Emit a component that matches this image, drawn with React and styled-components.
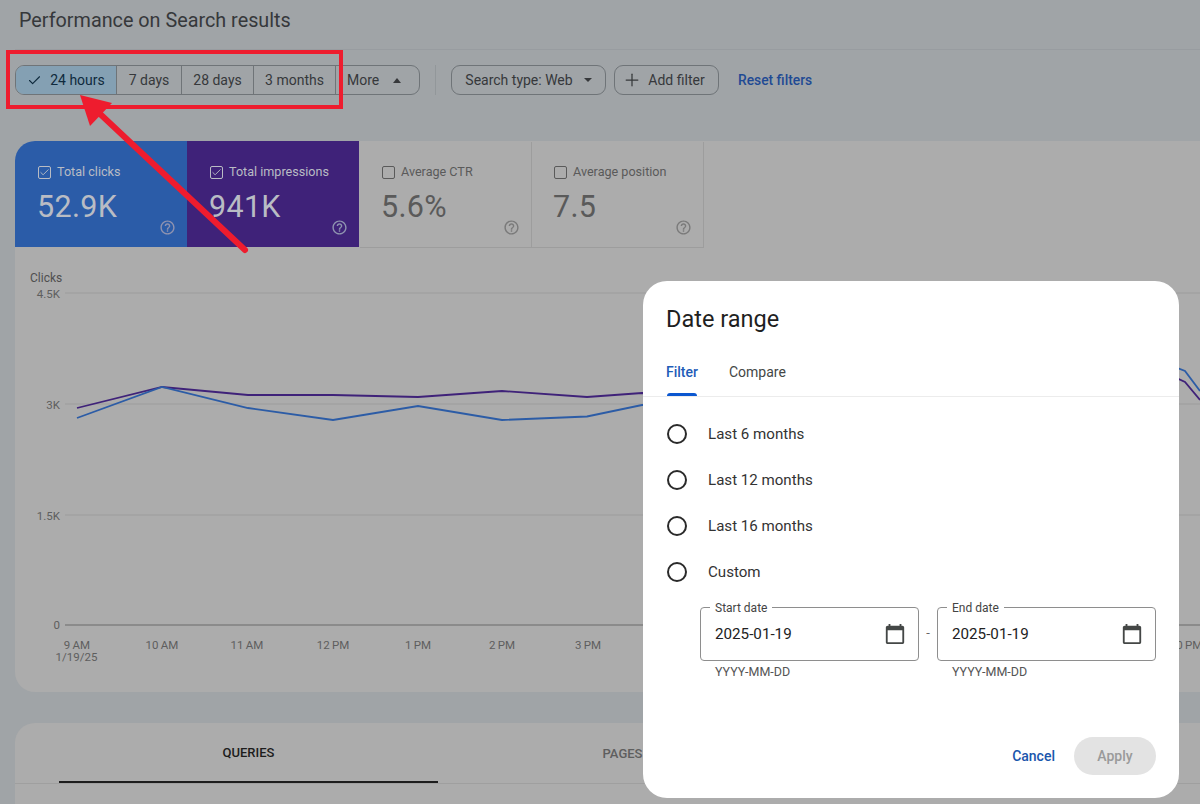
import React from "react";
import styled, { createGlobalStyle } from "styled-components";
import { Check, Plus } from "lucide-react";

const GlobalStyle = createGlobalStyle`
  html, body {
    margin: 0;
    padding: 0;
    height: 804px;
    overflow: hidden;
    background: #a0a4a7;
    font-family: Roboto, "Liberation Sans", sans-serif;
  }
`;

const ranges = [
  { label: "24 hours", selected: true },
  { label: "7 days", width: 65 },
  { label: "28 days", width: 72 },
  { label: "3 months", width: 82 },
];

const scores = [
  { label: "Total clicks", value: "52.9K", color: "#2b5ca8", checked: true },
  { label: "Total impressions", value: "941K", color: "#3f2279", checked: true },
  { label: "Average CTR", value: "5.6%" },
  { label: "Average position", value: "7.5" },
];

const gridLines = [
  { y: 293, label: "4.5K" },
  { y: 404, label: "3K" },
  { y: 515, label: "1.5K" },
];

const hours = [
  { x: 77, label: "9\u2009AM" },
  { x: 162, label: "10\u2009AM" },
  { x: 247, label: "11\u2009AM" },
  { x: 333, label: "12\u2009PM" },
  { x: 418, label: "1\u2009PM" },
  { x: 502, label: "2\u2009PM" },
  { x: 588, label: "3\u2009PM" },
  { x: 1186, label: "10\u2009PM" },
];

const bluePoints =
  "77,418 162,387 248,408 333,420 418,406 502,420 587,416.5 642,405 900,400 1172,366 1185,371 1200,391";
const purplePoints =
  "77,408 162,387 248,395 333,395 418,397 502,391 587,397 642,393 900,395 1172,376 1185,382 1200,400";

const presets = ["Last 6 months", "Last 12 months", "Last 16 months", "Custom"];

function HelpIcon({ light }) {
  return (
    <HelpSvg $light={light} viewBox="0 0 24 24">
      <path d="M11 18h2v-2h-2v2zm1-16C6.48 2 2 6.48 2 12s4.48 10 10 10 10-4.48 10-10S17.52 2 12 2zm0 18c-4.41 0-8-3.59-8-8s3.59-8 8-8 8 3.59 8 8-3.59 8-8 8zm0-14c-2.21 0-4 1.79-4 4h2c0-1.1.9-2 2-2s2 .9 2 2c0 2-3 1.75-3 5h2c0-2.25 3-2.5 3-5 0-2.21-1.79-4-4-4z" />
    </HelpSvg>
  );
}

function CalendarIcon() {
  return (
    <CalendarSvg viewBox="0 0 24 24">
      <path d="M20 3h-1V1h-2v2H7V1H5v2H4c-1.1 0-2 .9-2 2v16c0 1.1.9 2 2 2h16c1.1 0 2-.9 2-2V5c0-1.1-.9-2-2-2zm0 18H4V8h16v13z" />
    </CalendarSvg>
  );
}

function DateField({ label }) {
  return (
    <FieldColumn>
      <FieldBox>
        <FieldLabel>{label}</FieldLabel>
        <FieldValue>2025-01-19</FieldValue>
        <CalendarIcon />
      </FieldBox>
      <FieldHint>YYYY-MM-DD</FieldHint>
    </FieldColumn>
  );
}

export default function App() {
  return (
    <Page>
      <GlobalStyle />
      <Header>
        <Title>Performance on Search results</Title>
      </Header>

      <Toolbar>
        <RangeGroup>
          {ranges.map((item) => (
            <RangeItem key={item.label} $selected={item.selected} $width={item.width}>
              {item.selected && <Check size={15} strokeWidth={1.8} />}
              {item.label}
            </RangeItem>
          ))}
          <MoreItem>
            More
            <Caret $up />
          </MoreItem>
        </RangeGroup>
        <Divider />
        <Chip $width={155}>
          Search type: Web
          <Caret />
        </Chip>
        <Chip $width={105} $gap={6} $paddingRight={6}>
          <Plus size={20} strokeWidth={1.5} />
          Add filter
        </Chip>
        <ResetLink>Reset filters</ResetLink>
      </Toolbar>

      <Card>
        <ScoreRow>
          {scores.map((score) => (
            <Score key={score.label} $color={score.color}>
              <ScoreLabel>
                <Checkbox $checked={score.checked}>
                  {score.checked && <Check size={11} strokeWidth={2} />}
                </Checkbox>
                {score.label}
              </ScoreLabel>
              <ScoreValue>{score.value}</ScoreValue>
              <HelpIcon light={score.checked} />
            </Score>
          ))}
        </ScoreRow>
        <Chart viewBox="15 247 1185 445">
          <AxisTitle x="30" y="282">Clicks</AxisTitle>
          {gridLines.map((line) => (
            <g key={line.y}>
              <AxisText x="60" y={line.y + 5} textAnchor="end">{line.label}</AxisText>
              <line x1="65" x2="1200" y1={line.y} y2={line.y} stroke="#9c9c9c" />
            </g>
          ))}
          <AxisText x="60" y="629" textAnchor="end">0</AxisText>
          <line x1="65" x2="1200" y1="625" y2="625" stroke="#6a6a6a" />
          {hours.map((hour) => (
            <AxisText key={hour.x} x={hour.x} y="649" textAnchor="middle">{hour.label}</AxisText>
          ))}
          <AxisText x="76.5" y="661" textAnchor="middle">1/19/25</AxisText>
          <polyline points={purplePoints} fill="none" stroke="#3f2279" strokeWidth="1.8" />
          <polyline points={bluePoints} fill="none" stroke="#2c5ca6" strokeWidth="1.8" />
        </Chart>
      </Card>

      <TableCard>
        <TableTabs>
          <TableTab $active>QUERIES</TableTab>
          <TableTab>PAGES</TableTab>
        </TableTabs>
      </TableCard>

      <Annotation viewBox="0 0 1200 804">
        <rect x="8" y="52" width="333" height="55" fill="none" stroke="#ee1c2e" strokeWidth="4" />
        <line x1="245" y1="250" x2="98" y2="112" stroke="#ee1c2e" strokeWidth="6" strokeLinecap="round" />
        <polygon points="80,95 112,103 90,126" fill="#ee1c2e" />
      </Annotation>

      <Dialog>
        <DialogTitle>Date range</DialogTitle>
        <DialogTabs>
          <DialogTab $active>Filter</DialogTab>
          <DialogTab>Compare</DialogTab>
        </DialogTabs>
        <RadioList>
          {presets.map((preset) => (
            <RadioRow key={preset}>
              <Radio />
              {preset}
            </RadioRow>
          ))}
        </RadioList>
        <DateRow>
          <DateField label="Start date" />
          <Dash>-</Dash>
          <DateField label="End date" />
        </DateRow>
        <DialogActions>
          <CancelButton>Cancel</CancelButton>
          <ApplyButton>Apply</ApplyButton>
        </DialogActions>
      </Dialog>
    </Page>
  );
}

const Page = styled.div`
  position: relative;
  width: 1200px;
  height: 804px;
  overflow: hidden;
  padding-left: 15px;
  box-sizing: border-box;
  color: #3a3c3f;
`;

const Header = styled.div`
  height: 50px;
  border-bottom: 1px solid #989ca0;
  box-sizing: border-box;
  padding: 9px 0 0 4px;
`;

const Title = styled.h1`
  margin: 0;
  font-size: 19.8px;
  line-height: 24px;
  font-weight: 400;
  color: #36383b;
`;

const Toolbar = styled.div`
  display: flex;
  align-items: center;
  gap: 8px;
  height: 30px;
  margin-top: 15px;
`;

const RangeGroup = styled.div`
  display: flex;
  width: 405px;
  height: 30px;
  box-sizing: border-box;
  border: 1px solid #6f7478;
  border-radius: 9px;
  overflow: hidden;
`;

const RangeItem = styled.div`
  display: flex;
  align-items: center;
  justify-content: center;
  gap: 8px;
  flex: none;
  width: ${(p) => (p.$width ? `${p.$width}px` : "101px")};
  box-sizing: border-box;
  border-right: 1px solid #6f7478;
  font-size: 14px;
  color: ${(p) => (p.$selected ? "#0f2a3d" : "#36383b")};
  background: ${(p) => (p.$selected ? "#84a0b3" : "transparent")};
`;

const MoreItem = styled.div`
  display: flex;
  align-items: center;
  gap: 14px;
  padding-left: 11px;
  font-size: 14px;
  color: #36383b;
`;

const Caret = styled.span`
  width: 0;
  height: 0;
  border-left: 4.5px solid transparent;
  border-right: 4.5px solid transparent;
  ${(p) => (p.$up ? "border-bottom: 5px solid #36383b;" : "border-top: 4px solid #36383b;")}
`;

const Divider = styled.div`
  width: 1px;
  height: 30px;
  background: #92979a;
  margin: 0 7px;
`;

const Chip = styled.div`
  display: flex;
  align-items: center;
  justify-content: center;
  gap: ${(p) => p.$gap ?? 11}px;
  width: ${(p) => p.$width}px;
  height: 30px;
  box-sizing: border-box;
  padding-right: ${(p) => p.$paddingRight ?? 0}px;
  border: 1px solid #6f7478;
  border-radius: 9px;
  font-size: 14px;
  color: #36383b;
`;

const ResetLink = styled.a`
  margin-left: 11px;
  font-size: 13.8px;
  font-weight: 500;
  color: #1f4a94;
`;

const Card = styled.div`
  height: 551px;
  margin-top: 46px;
  background: #acacac;
  border-radius: 20px 0 0 20px;
  overflow: hidden;
`;

const ScoreRow = styled.div`
  display: flex;
  height: 106px;
`;

const Score = styled.div`
  position: relative;
  width: 172px;
  box-sizing: border-box;
  padding: 23px 0 0 23px;
  background: ${(p) => p.$color || "transparent"};
  color: ${(p) => (p.$color ? "#b9bcc4" : "#5a5a5a")};
  ${(p) => !p.$color && "box-shadow: 1px 1px 0 #9d9d9d;"}
`;

const ScoreLabel = styled.div`
  display: flex;
  align-items: center;
  gap: 6px;
  font-size: 12.6px;
  line-height: 16px;
`;

const Checkbox = styled.span`
  display: flex;
  align-items: center;
  justify-content: center;
  width: 13px;
  height: 13px;
  box-sizing: border-box;
  border: 1.3px solid currentColor;
  border-radius: 2px;
`;

const ScoreValue = styled.div`
  margin-top: 9px;
  margin-left: -1px;
  font-size: 30.5px;
  line-height: 36px;
  letter-spacing: 0.3px;
`;

const HelpSvg = styled.svg`
  position: absolute;
  right: 11px;
  bottom: 11px;
  width: 17px;
  height: 17px;
  fill: ${(p) => (p.$light ? "#8f93b0" : "#7a7a7a")};
`;

const Chart = styled.svg`
  display: block;
  width: 1185px;
  height: 445px;
`;

const AxisText = styled.text`
  font-size: 11.5px;
  fill: #5e5e5e;
`;

const AxisTitle = styled.text`
  font-size: 12px;
  fill: #4f4f4f;
`;

const TableCard = styled.div`
  height: 100px;
  margin-top: 31px;
  background: #acacac;
  border-radius: 20px 0 0 0;
`;

const TableTabs = styled.div`
  display: grid;
  grid-template-columns: 379px 369px;
  height: 60px;
  padding-left: 44px;
  border-bottom: 1px solid #9f9f9f;
`;

const TableTab = styled.div`
  display: flex;
  align-items: center;
  justify-content: center;
  height: 60px;
  box-sizing: border-box;
  font-size: 13px;
  font-weight: 500;
  color: ${(p) => (p.$active ? "#1d1d1d" : "#5e5e5e")};
  ${(p) => p.$active && "border-bottom: 2px solid #1d1d1d;"}
`;

const Annotation = styled.svg`
  position: absolute;
  left: 0;
  top: 0;
  width: 1200px;
  height: 804px;
  pointer-events: none;
`;

const Dialog = styled.div`
  position: absolute;
  left: 643px;
  top: 281px;
  width: 536px;
  height: 517px;
  box-sizing: border-box;
  background: #fff;
  border-radius: 24px;
  padding-top: 24px;
  display: flex;
  flex-direction: column;
`;

const DialogTitle = styled.h2`
  margin: 0 0 0 23px;
  font-size: 23.5px;
  line-height: 28px;
  font-weight: 400;
  color: #1f1f1f;
`;

const DialogTabs = styled.div`
  display: flex;
  gap: 31px;
  height: 35px;
  margin-top: 28px;
  padding-left: 23px;
  border-bottom: 1px solid #ececec;
`;

const DialogTab = styled.div`
  position: relative;
  font-size: 14px;
  line-height: 22px;
  font-weight: ${(p) => (p.$active ? 500 : 400)};
  color: ${(p) => (p.$active ? "#1f5cb8" : "#444746")};
  ${(p) =>
    p.$active &&
    `&::after {
      content: "";
      position: absolute;
      left: 1px;
      right: 1px;
      bottom: 0;
      height: 3px;
      border-radius: 3px 3px 0 0;
      background: #0b57d0;
    }`}
`;

const RadioList = styled.div`
  display: flex;
  flex-direction: column;
  gap: 22px;
  margin-top: 25px;
  padding-left: 24px;
`;

const RadioRow = styled.div`
  display: flex;
  align-items: center;
  gap: 21px;
  height: 24px;
  font-size: 15.1px;
  color: #333;
`;

const Radio = styled.span`
  width: 20px;
  height: 20px;
  box-sizing: border-box;
  border: 2px solid #2a2a2a;
  border-radius: 50%;
`;

const DateRow = styled.div`
  display: flex;
  margin-top: 23px;
  padding-left: 57px;
`;

const FieldColumn = styled.div`
  width: 219px;
`;

const FieldBox = styled.div`
  position: relative;
  display: flex;
  align-items: center;
  justify-content: space-between;
  height: 54px;
  box-sizing: border-box;
  padding: 0 12px 0 14px;
  border: 1px solid #8e8e8e;
  border-radius: 4px;
`;

const FieldLabel = styled.span`
  position: absolute;
  left: 9px;
  top: -7px;
  padding: 0 5px;
  background: #fff;
  font-size: 12px;
  line-height: 14px;
  color: #444;
`;

const FieldValue = styled.span`
  font-size: 15.2px;
  color: #222;
`;

const CalendarSvg = styled.svg`
  width: 22px;
  height: 22px;
  fill: #444746;
`;

const FieldHint = styled.div`
  margin-top: 4px;
  padding-left: 15px;
  font-size: 12.5px;
  line-height: 14px;
  color: #555;
`;

const Dash = styled.span`
  width: 18px;
  padding-top: 18px;
  text-align: center;
  font-size: 13px;
  color: #666;
`;

const DialogActions = styled.div`
  display: flex;
  align-items: center;
  justify-content: flex-end;
  gap: 19px;
  margin-top: auto;
  padding: 0 23px 23px 0;
`;

const CancelButton = styled.span`
  font-size: 14px;
  font-weight: 500;
  color: #1a56ac;
`;

const ApplyButton = styled.span`
  display: flex;
  align-items: center;
  justify-content: center;
  width: 82px;
  height: 38px;
  border-radius: 19px;
  background: #e3e3e3;
  font-size: 14px;
  font-weight: 500;
  color: #9a9a9a;
`;
